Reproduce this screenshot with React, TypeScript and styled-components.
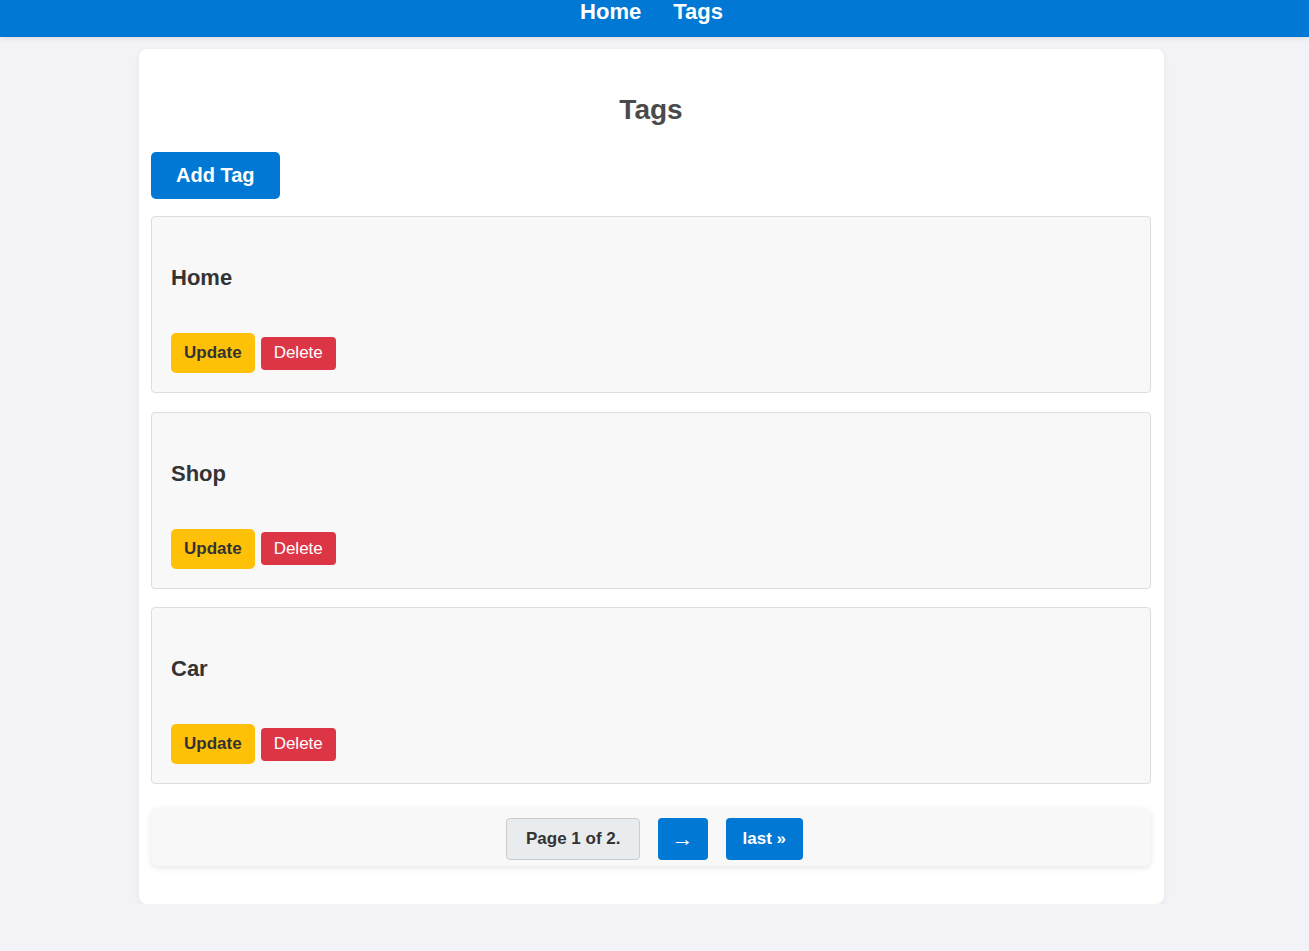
import styled, { createGlobalStyle } from 'styled-components';

const GlobalStyle = createGlobalStyle`
  body {
    margin: 0;
    background: #f3f2f7;
    font-family: "Liberation Sans", Arial, sans-serif;
  }
`

const tags = ['Home', 'Shop', 'Car'];

export default function App() {
  return (
    <>
      <GlobalStyle />
      <Header>
        <Nav>
          <NavLink href="#">Home</NavLink>
          <NavLink href="#">Tags</NavLink>
        </Nav>
      </Header>
      <Main>
        <Title>Tags</Title>
        <AddButton>Add Tag</AddButton>
        <List>
          {tags.map((tag) => (
            <Card key={tag}>
              <CardTitle>{tag}</CardTitle>
              <Actions>
                <UpdateButton>Update</UpdateButton>
                <DeleteButton>Delete</DeleteButton>
              </Actions>
            </Card>
          ))}
        </List>
        <Pagination>
          <PageInfo>Page 1 of 2.</PageInfo>
          <PageLink href="#" $arrow>→</PageLink>
          <PageLink href="#">last »</PageLink>
        </Pagination>
      </Main>
    </>
  );
}

const Header = styled.header`
  height: 37px;
  background: #0078d4;
  box-shadow: 0 2px 4px rgba(0, 0, 0, 0.08);
  display: flex;
  justify-content: center;
`
const Nav = styled.nav`
  display: flex;
  gap: 32px;
  padding-top: 1px;
  margin-right: 6px;
`
const NavLink = styled.a`
  color: #fff;
  font-weight: 700;
  font-size: 22px;
  line-height: 22px;
  text-decoration: none;
`
const Main = styled.main`
  box-sizing: border-box;
  width: 1025px;
  margin: 12px 0 0 139px;
  padding: 12px 13px 38px 12px;
  background: #fff;
  border-radius: 8px;
  box-shadow: 0 2px 6px rgba(0, 0, 0, 0.06);
  display: flex;
  flex-direction: column;
`
const Title = styled.h2`
  margin: 33px 0 26px;
  text-align: center;
  font-size: 28px;
  line-height: 32px;
  font-weight: 700;
  color: #4a4a4a;
`
const AddButton = styled.button`
  align-self: flex-start;
  height: 47px;
  padding: 0 25px;
  border: none;
  border-radius: 5px;
  background: #0078d4;
  color: #fff;
  font-family: inherit;
  font-size: 20px;
  font-weight: 700;
  cursor: pointer;
`
const List = styled.div`
  display: flex;
  flex-direction: column;
  gap: 18.5px;
  margin-top: 17px;
`
const Card = styled.div`
  box-sizing: border-box;
  height: 177px;
  padding: 20px 19px 19px;
  background: #f8f8f8;
  border: 1px solid #dddddd;
  border-radius: 4px;
  display: flex;
  flex-direction: column;
`
const CardTitle = styled.h3`
  margin: 28px 0 0;
  font-size: 22px;
  line-height: 26px;
  font-weight: 700;
  color: #333;
`
const Actions = styled.div`
  display: flex;
  align-items: center;
  gap: 6px;
  margin-top: auto;
`
const UpdateButton = styled.button`
  height: 40px;
  padding: 0 13px;
  border: none;
  border-radius: 5px;
  background: #ffc107;
  color: #333;
  font-family: inherit;
  font-size: 17px;
  font-weight: 700;
  cursor: pointer;
`
const DeleteButton = styled.button`
  height: 33px;
  padding: 0 13px;
  border: none;
  border-radius: 4px;
  background: #dc3545;
  color: #fff;
  font-family: inherit;
  font-size: 17px;
  cursor: pointer;
`
const Pagination = styled.div`
  box-sizing: border-box;
  margin-top: 24px;
  height: 58px;
  padding: 4px 0 0 7px;
  background: #f8f8f8;
  border-radius: 8px;
  box-shadow: 0 2px 6px rgba(0, 0, 0, 0.1);
  display: flex;
  align-items: center;
  justify-content: center;
  gap: 18px;
`
const PageInfo = styled.span`
  box-sizing: border-box;
  height: 42px;
  padding: 0 18px 0 19px;
  display: flex;
  align-items: center;
  background: #e9ecef;
  border: 1px solid #cccccc;
  border-radius: 4px;
  color: #333;
  font-size: 17px;
  font-weight: 700;
`
const PageLink = styled.a<{ $arrow?: boolean }>`
  box-sizing: border-box;
  height: 42px;
  padding: 0 ${(p) => (p.$arrow ? '14px' : '17px')};
  display: flex;
  align-items: center;
  background: #0078d4;
  border-radius: 4px;
  color: #fff;
  font-size: ${(p) => (p.$arrow ? '22px' : '17px')};
  font-weight: ${(p) => (p.$arrow ? 400 : 700)};
  text-decoration: none;
`
